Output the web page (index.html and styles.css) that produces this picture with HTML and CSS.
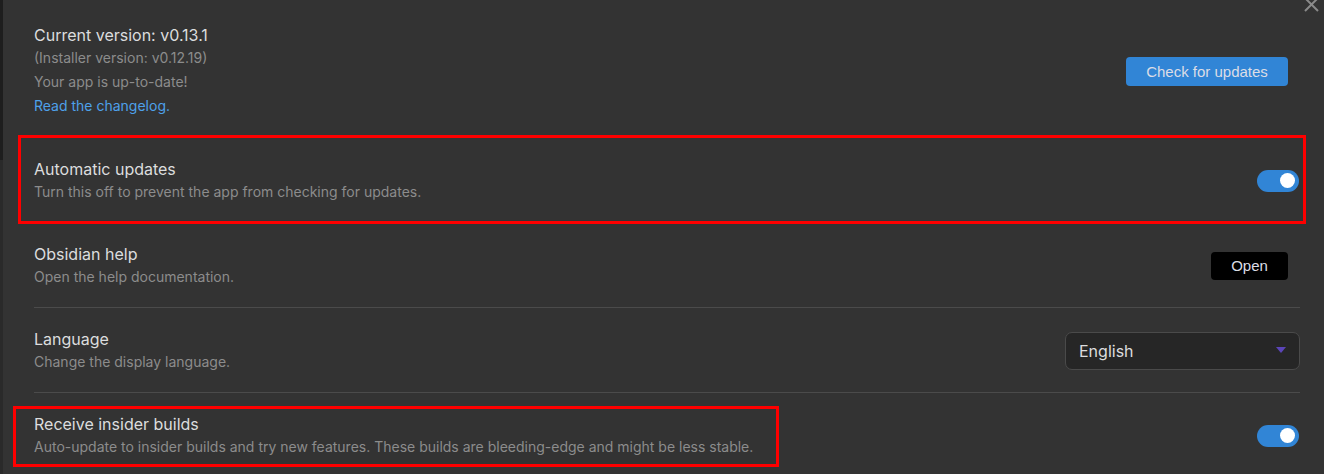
FILE: index.html
```html
<!DOCTYPE html>
<html lang="en">
<head>
<meta charset="utf-8">
<title>Settings</title>
<link rel="stylesheet" href="styles.css">
</head>
<body>
<div class="page">
  <div class="edge"></div>
  <div class="settings">
    <div class="item first">
      <div class="info">
        <div class="name">Current version: v0.13.1</div>
        <div class="desc">(Installer version: v0.12.19)</div>
        <div class="desc">Your app is up-to-date!</div>
        <div class="desc"><a class="link" href="#">Read the changelog.</a></div>
      </div>
      <div class="control"><button class="btn cta">Check for updates</button></div>
    </div>
    <div class="item">
      <div class="info">
        <div class="name">Automatic updates</div>
        <div class="desc">Turn this off to prevent the app from checking for updates.</div>
      </div>
      <div class="control"><div class="toggle on"><span class="knob"></span></div></div>
    </div>
    <div class="item">
      <div class="info">
        <div class="name">Obsidian help</div>
        <div class="desc">Open the help documentation.</div>
      </div>
      <div class="control"><button class="btn dark">Open</button></div>
    </div>
    <div class="item">
      <div class="info">
        <div class="name">Language</div>
        <div class="desc">Change the display language.</div>
      </div>
      <div class="control">
        <div class="dropdown"><span>English</span><span class="caret"></span></div>
      </div>
    </div>
    <div class="item">
      <div class="info">
        <div class="name">Receive insider builds</div>
        <div class="desc">Auto-update to insider builds and try new features. These builds are bleeding-edge and might be less stable.</div>
      </div>
      <div class="control"><div class="toggle on"><span class="knob"></span></div></div>
    </div>
  </div>
  <svg class="close" width="18" height="18" viewBox="0 0 18 18"><path d="M2 2 L15 15 M15 2 L2 15" stroke="#8a8a8a" stroke-width="2" fill="none"/></svg>
  <div class="mark mark-one"></div>
  <div class="mark mark-two"></div>
</div>
</body>
</html>
```

FILE: styles.css
```css
html, body {
  margin: 0;
  padding: 0;
  background: #333333;
  height: 474px;
  overflow: hidden;
}
.page {
  position: relative;
  display: flex;
  height: 474px;
  font-family: Inter, "Noto Sans", sans-serif;
}
.edge {
  width: 3px;
  flex: none;
  background: linear-gradient(to bottom, #1e1e1e 0, #1e1e1e 160px, #2a2a2a 160px);
}
.settings {
  flex: 1;
  padding: 0 24px 0 31px;
}
.item {
  display: flex;
  align-items: center;
  justify-content: space-between;
  border-top: 1px solid #4b4b4b;
  padding: 20px 0 19px;
  height: 45px;
}
.item.first {
  border-top: none;
  padding: 24px 0 20px;
  height: 93px;
}
.info {
  flex: 1;
}
.name {
  color: #dcddde;
  font-size: 16px;
  line-height: 22px;
}
.desc {
  color: #8c8c8c;
  font-size: 14px;
  line-height: 23px;
}
.first .desc {
  line-height: 24px;
}
.link {
  color: #4ea1ea;
  text-decoration: none;
}
.control {
  display: flex;
  align-items: center;
}
.btn {
  font-family: "Liberation Sans", Arial, sans-serif;
  font-size: 15px;
  border: none;
  border-radius: 4px;
  color: #dcdde6;
  cursor: pointer;
}
.cta {
  background: #3185d6;
  width: 162px;
  height: 29px;
  margin-right: 12px;
  margin-top: 2px;
}
.dark {
  background: #000000;
  width: 77px;
  height: 28px;
  margin-right: 12px;
}
.toggle {
  width: 42px;
  height: 22px;
  border-radius: 11px;
  background: #3185d6;
  display: flex;
  align-items: center;
  justify-content: flex-end;
  padding: 0 4px;
  box-sizing: border-box;
  margin-right: 1px;
}
.knob {
  width: 15px;
  height: 15px;
  border-radius: 50%;
  background: #ffffff;
}
.dropdown {
  width: 235px;
  height: 38px;
  box-sizing: border-box;
  background: #262626;
  border: 1px solid #4a4a4a;
  border-radius: 7px;
  display: flex;
  align-items: center;
  justify-content: space-between;
  padding: 0 13px 0 13px;
  color: #dcddde;
  font-size: 16px;
}
.caret {
  width: 0;
  height: 0;
  border-left: 5px solid transparent;
  border-right: 5px solid transparent;
  border-top: 6px solid #5b45b8;
  margin-top: -2px;
}
.close {
  position: absolute;
  right: 3px;
  top: -4px;
}
.mark {
  position: absolute;
  border: 3px solid #ff0000;
  box-sizing: border-box;
  pointer-events: none;
}
.mark-one {
  left: 18px;
  top: 135px;
  width: 1288px;
  height: 89px;
}
.mark-two {
  left: 13px;
  top: 406px;
  width: 766px;
  height: 61px;
}
```
